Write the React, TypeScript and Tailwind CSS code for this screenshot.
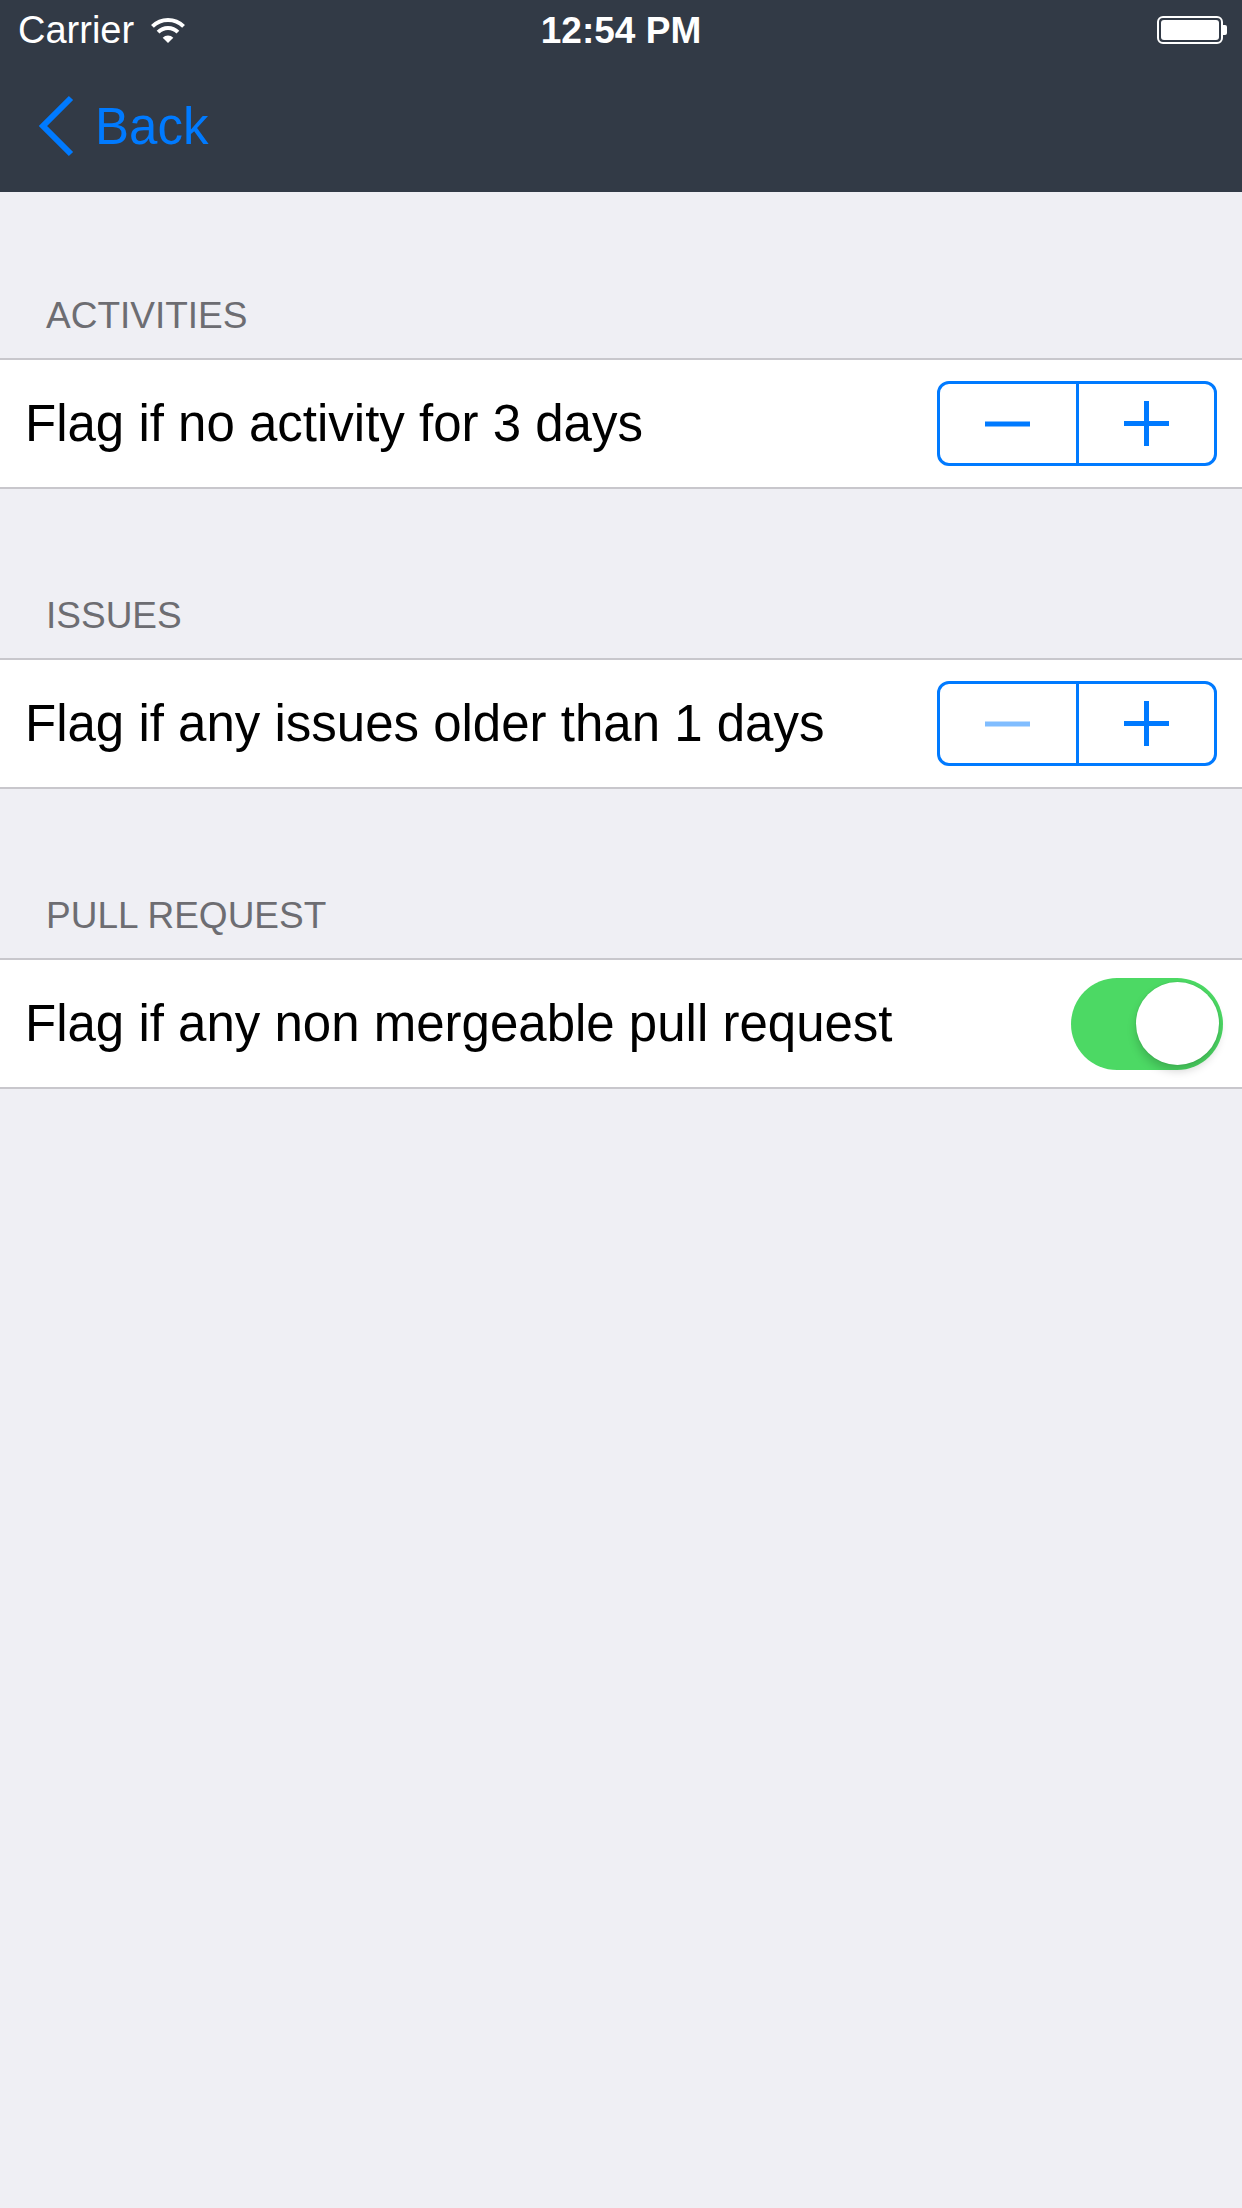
const BLUE = "#007aff";

function Stepper({ minusDisabled = false }: { minusDisabled?: boolean }) {
  return (
    <div className="flex w-[280px] h-[85px] rounded-[12px] border-[3px] border-[#007aff] overflow-hidden">
      <button className="flex-1 flex items-center justify-center">
        <svg width="45" height="6" viewBox="0 0 45 6">
          <rect x="0" y="0.5" width="45" height="5" fill={minusDisabled ? "#80bdff" : BLUE} />
        </svg>
      </button>
      <div className="w-[3px] bg-[#007aff]" />
      <button className="flex-1 flex items-center justify-center">
        <svg width="45" height="45" viewBox="0 0 45 45">
          <rect x="0" y="20" width="45" height="5" fill={BLUE} />
          <rect x="20" y="0" width="5" height="45" fill={BLUE} />
        </svg>
      </button>
    </div>
  );
}

function Toggle() {
  return (
    <div className="flex items-center justify-end w-[152px] h-[92px] rounded-full bg-[#4cd964] pr-[4px]">
      <div className="w-[83px] h-[83px] rounded-full bg-white shadow-[0_6px_10px_rgba(0,0,0,0.18),0_0_0_1px_rgba(0,0,0,0.04)]" />
    </div>
  );
}

function Section({ title, first = false, children }: { title: string; first?: boolean; children: React.ReactNode }) {
  return (
    <div>
      <div className={`flex items-end px-[46px] pb-[24px] ${first ? "h-[166px]" : "h-[169px]"}`}>
        <span className="text-[37px] leading-none text-[#6d6d72] uppercase">{title}</span>
      </div>
      <div className="bg-white border-y-2 border-[#c8c7cc]">{children}</div>
    </div>
  );
}

export default function App() {
  return (
    <div
      className="min-h-screen w-full bg-[#efeff4]"
      style={{ fontFamily: '"Liberation Sans", Arial, sans-serif' }}
    >
      {/* Status bar + nav */}
      <header className="bg-[#323a46]">
        <div className="relative flex items-center justify-between h-[60px] pl-[18px] pr-[15px] text-white">
          <div className="flex items-center gap-[16px]">
            <span className="text-[38px] leading-none">Carrier</span>
            <svg width="36" height="28" viewBox="0 0 36 28">
              <path d="M2.44 10.44 A22 22 0 0 1 33.56 10.44" stroke="white" strokeWidth="4" fill="none" />
              <path d="M8.1 16.1 A14 14 0 0 1 27.9 16.1" stroke="white" strokeWidth="4" fill="none" />
              <path d="M18 27 L12.7 21.7 A7.5 7.5 0 0 1 23.3 21.7 Z" fill="white" />
            </svg>
          </div>
          <span className="absolute left-1/2 -translate-x-1/2 text-[37px] leading-none font-semibold">12:54 PM</span>
          <div className="flex items-center">
            <div className="w-[66px] h-[28px] rounded-[6px] border-2 border-white p-[2px]">
              <div className="w-full h-full rounded-[3px] bg-white" />
            </div>
            <div className="w-[4px] h-[10px] rounded-r-[2px] bg-white" />
          </div>
        </div>
        <div className="flex items-center h-[132px] pl-[37px]">
          <button className="flex items-center gap-[20px] text-[#007aff]">
            <svg width="38" height="62" viewBox="0 0 38 62">
              <path d="M34 3 L6 31 L34 59" stroke={BLUE} strokeWidth="6" fill="none" strokeLinecap="butt" strokeLinejoin="miter" />
            </svg>
            <span className="text-[51px] leading-none">Back</span>
          </button>
        </div>
      </header>

      <Section title="Activities" first>
        <div className="flex items-center justify-between h-[127px] pl-[25px] pr-[25px]">
          <span className="text-[51px] leading-none text-black">Flag if no activity for 3 days</span>
          <Stepper />
        </div>
      </Section>

      <Section title="Issues">
        <div className="flex items-center justify-between h-[127px] pl-[25px] pr-[25px]">
          <span className="text-[51px] leading-none text-black">Flag if any issues older than 1 days</span>
          <Stepper minusDisabled />
        </div>
      </Section>

      <Section title="Pull Request">
        <div className="flex items-center justify-between h-[127px] pl-[25px] pr-[19px]">
          <span className="text-[51px] leading-none text-black">Flag if any non mergeable pull request</span>
          <Toggle />
        </div>
      </Section>
    </div>
  );
}
